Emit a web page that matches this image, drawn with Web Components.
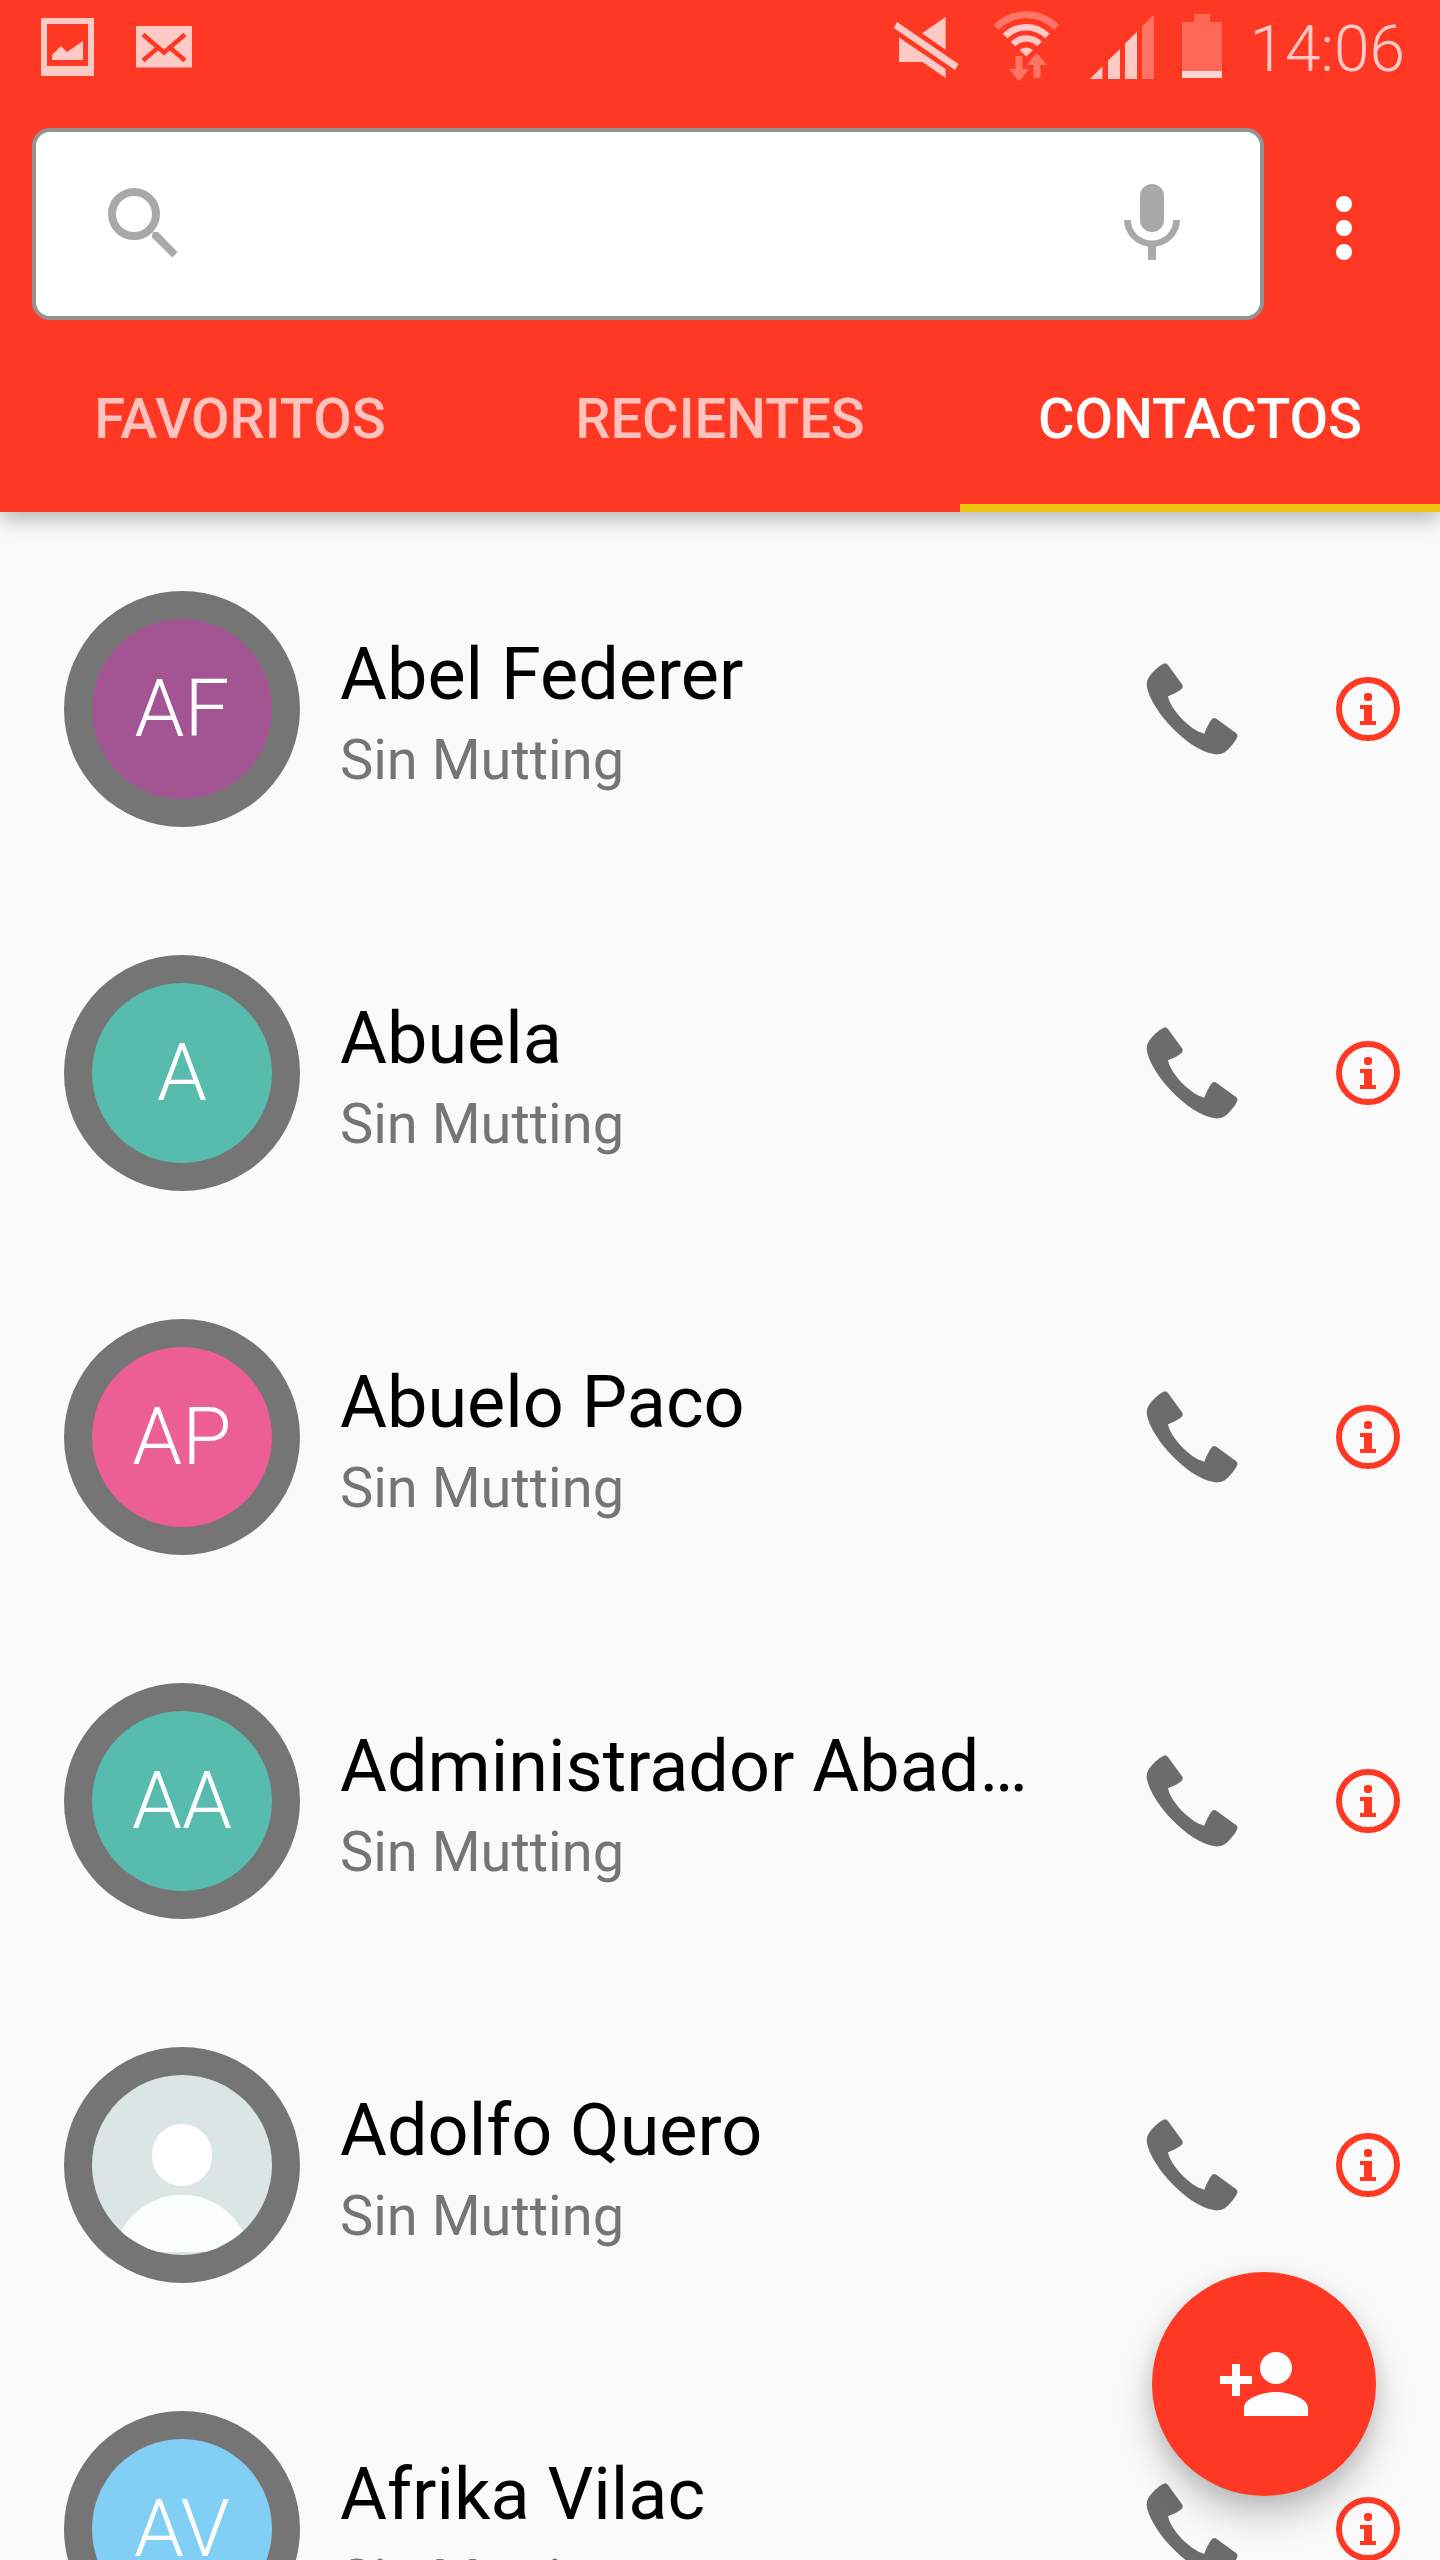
<!DOCTYPE html>
<html lang="es">
<head>
<meta charset="utf-8">
<meta name="viewport" content="width=device-width, initial-scale=1">
<title>Contactos</title>
<style>
  body { margin: 0; background: #fafafa; font-family: Roboto, "Liberation Sans", sans-serif; }
</style>
</head>
<body>
<dialer-app>
  <app-header slot="header">
    <status-bar slot="status" time="14:06"></status-bar>
    <search-bar slot="search" label="Buscar contactos"></search-bar>
    <tab-strip slot="tabs" tabs="FAVORITOS,RECIENTES,CONTACTOS" selected="CONTACTOS"></tab-strip>
  </app-header>
  <contact-row name="Abel Federer" initials="AF" color="#a35593">Sin Mutting</contact-row>
  <contact-row name="Abuela" initials="A" color="#57bbad">Sin Mutting</contact-row>
  <contact-row name="Abuelo Paco" initials="AP" color="#ec5f95">Sin Mutting</contact-row>
  <contact-row name="Administrador Abad…" initials="AA" color="#57bbad">Sin Mutting</contact-row>
  <contact-row name="Adolfo Quero" color="#dbe6e4">Sin Mutting</contact-row>
  <contact-row name="Afrika Vilac" initials="AV" color="#81cff5">Sin Mutting</contact-row>
  <add-button slot="action" label="Añadir contacto"></add-button>
</dialer-app>

<script>
const reset = `
  *, *::before, *::after { box-sizing: border-box; }
  svg { display: block; flex: none; }
  button { margin: 0; padding: 0; border: 0; background: none; font: inherit; color: inherit; cursor: pointer; }
`;

class BaseElement extends HTMLElement {
  constructor() {
    super();
    this.attachShadow({ mode: 'open' });
  }
  connectedCallback() {
    this.shadowRoot.innerHTML = `<style>${reset}${this.styles()}</style>${this.markup()}`;
  }
}

class DialerApp extends BaseElement {
  styles() {
    return `
      :host { display: flex; flex-direction: column; height: 100vh; overflow: hidden; background: #fafafa; }
      main { flex: 1; min-height: 0; overflow: hidden; padding-top: 15px; }
      .action { position: fixed; right: 64px; bottom: 64px; z-index: 2; }
    `;
  }
  markup() {
    return `
      <slot name="header"></slot>
      <main><slot></slot></main>
      <div class="action"><slot name="action"></slot></div>
    `;
  }
}

class AppHeader extends BaseElement {
  styles() {
    return `
      :host { display: block; flex: none; position: relative; z-index: 1; background: #ff3824; color: #fff;
              box-shadow: 0 8px 20px rgba(0, 0, 0, .26); }
    `;
  }
  markup() {
    return `<header><slot name="status"></slot><slot name="search"></slot><slot name="tabs"></slot></header>`;
  }
}

class StatusBar extends BaseElement {
  styles() {
    return `
      :host { display: flex; justify-content: space-between; height: 96px; padding: 0 35px 0 41px; color: #ffcac6; }
      .group { display: flex; align-items: flex-start; gap: 28px; }
      .group.notices { gap: 41px; }
      svg { fill: #ffcac6; }
      .faint { fill: #ff7465; }
      time { font-size: 64px; font-weight: 300; line-height: 100px; }
    `;
  }
  markup() {
    return `
      <div class="group notices">
        <svg width="54" height="96" viewBox="41 0 54 96" aria-hidden="true">
          <path fill-rule="evenodd" d="M41 18h53v58H41zM47 24v42h41V24z"/>
          <path d="M52 60v-5l9-9 6 6 16-11v19z"/>
        </svg>
        <svg width="56" height="96" viewBox="136 0 56 96" aria-hidden="true">
          <path d="M136 26h56v41.500h-56z"/>
          <path d="M143 34.500L164 52.500 185 34.500M143 60.500L157 48.500M171 48.500L185 60.500" fill="none" stroke="#ff3824" stroke-width="4.500"/>
        </svg>
      </div>
      <div class="group">
        <svg width="70" height="96" viewBox="894 0 70 96" aria-hidden="true">
          <path d="M898 22L959.500 64 956 70 894.800 28zM946.600 17V49.700L923 33.300zM900 37.500L946.600 69V78L923.600 62H900z"/>
        </svg>
        <svg width="70" height="96" viewBox="992 0 70 96" aria-hidden="true">
          <g fill="none" stroke-width="6.500">
            <path stroke="#ff7465" stroke-width="7" d="M997 27.500a42.500 42.500 0 0 1 60.500 0"/>
            <path stroke="#ffcac6" d="M1006 36a30 30 0 0 1 42.500 0"/>
            <path stroke="#ffcac6" d="M1014 44a19 19 0 0 1 26.500 0"/>
          </g>
          <path d="M1020.500 50a10 10 0 0 1 13.500 0L1027.300 56.500z"/>
          <path class="faint" d="M1016.500 56h7v13h6.500L1020 81.500 1010 69h6.500zM1037.600 52.700L1048 65h-6.500v13h-7V65h-7z"/>
        </svg>
        <svg width="65" height="96" viewBox="1090 0 65 96" aria-hidden="true">
          <path d="M1091 79L1103.400 66.500V79zM1109 79V60.500L1121 49V79zM1126 79V43.500L1138 31.700V79z"/>
          <path class="faint" d="M1143 79V26.500L1155 14.500V79z"/>
        </svg>
        <svg width="40" height="96" viewBox="1183 0 40 96" aria-hidden="true">
          <path fill="#ff6757" d="M1195 14h16v8h12v49h-40V22h12z"/>
          <path fill="#ffd8d4" d="M1183 71h40v7h-40z"/>
        </svg>
        <time>${this.getAttribute('time')}</time>
      </div>
    `;
  }
}

class SearchBar extends BaseElement {
  styles() {
    return `
      :host { display: flex; align-items: center; padding: 32px 48px 0 32px; }
      form { flex: 1; display: flex; align-items: center; height: 192px; margin: 0; padding: 0 60px 0 60px;
             background: #fff; border: 4px solid #939393; border-radius: 18px; }
      input { flex: 1; min-width: 0; height: 96px; border: 0; outline: 0; padding: 0 24px; background: none;
              font: inherit; font-size: 56px; color: #000; }
      form svg { fill: #a9a9a9; }
      .more { display: flex; justify-content: center; width: 96px; margin-left: 32px; padding-top: 8px; }
      .more svg { fill: #fff; }
    `;
  }
  markup() {
    return `
      <form role="search">
        <svg width="96" height="96" viewBox="96 176 96 96" aria-hidden="true">
          <circle cx="134" cy="214" r="22" fill="none" stroke="#a9a9a9" stroke-width="8"/>
          <path d="M152 235l1-3h5l19.500 20-5 5.500-20.500-20z"/>
        </svg>
        <input type="text" aria-label="${this.getAttribute('label')}">
        <button type="button" aria-label="Búsqueda por voz">
          <svg width="96" height="96" viewBox="1104 176 96 96" aria-hidden="true">
            <rect x="1140" y="184" width="24" height="48" rx="12"/>
            <path d="M1124 220h6.800a21.200 20.500 0 0 0 42.400 0h6.800a28 27 0 0 1-24 26.400V260h-8v-13.600A28 27 0 0 1 1124 220z"/>
          </svg>
        </button>
      </form>
      <button class="more" type="button" aria-label="Más opciones">
        <svg width="96" height="96" viewBox="0 0 24 24" aria-hidden="true">
          <circle cx="12" cy="6" r="2"/><circle cx="12" cy="12" r="2"/><circle cx="12" cy="18" r="2"/>
        </svg>
      </button>
    `;
  }
}

class TabStrip extends BaseElement {
  styles() {
    return `
      :host { display: block; }
      div { display: flex; }
      button { flex: 1 1 0; height: 192px; padding-top: 6px; font-size: 56px; font-weight: 500; line-height: 66px;
               color: #ffc2bd; text-align: center; }
      button[aria-selected="true"] { color: #fff; box-shadow: inset 0 -8px #efc312; }
    `;
  }
  markup() {
    const selected = this.getAttribute('selected');
    const tabs = this.getAttribute('tabs').split(',')
      .map(t => `<button type="button" role="tab" aria-selected="${t === selected}">${t}</button>`).join('');
    return `<div role="tablist">${tabs}</div>`;
  }
}

class ContactAvatar extends BaseElement {
  styles() {
    return `
      :host { display: block; flex: none; width: 236px; height: 236px; border-radius: 50%; background: #757575; padding: 28px; box-sizing: border-box; }
      .disc { width: 180px; height: 180px; border-radius: 50%; overflow: hidden; background: ${this.getAttribute('color')};
              color: #fff; font-size: 80px; font-weight: 300; line-height: 180px; text-align: center; }
    `;
  }
  markup() {
    const initials = this.getAttribute('initials');
    const person = `
      <svg width="180" height="180" viewBox="0 0 180 180" aria-hidden="true">
        <rect x="60" y="49" width="60" height="62" rx="30" fill="#fff"/>
        <path d="M22 177a69 69 0 0 1 136 0z" fill="#fbfffb"/>
      </svg>`;
    return `<div class="disc">${initials || person}</div>`;
  }
}

class ContactRow extends BaseElement {
  styles() {
    return `
      :host { display: flex; align-items: center; height: 364px; padding: 0 40px 0 64px; }
      .text { flex: 1; min-width: 0; margin-left: 40px; }
      .name, .detail { overflow: hidden; white-space: nowrap; text-overflow: ellipsis; }
      .name { font-size: 72px; line-height: 103px; color: #000; }
      .detail { font-size: 56px; line-height: 69px; color: #757575; }
      .call svg { fill: #6c6c6c; }
      .info { margin-left: 96px; }
    `;
  }
  markup() {
    const name = this.getAttribute('name');
    const initials = this.getAttribute('initials') || '';
    return `
      <contact-avatar initials="${initials}" color="${this.getAttribute('color')}"></contact-avatar>
      <div class="text">
        <div class="name">${name}</div>
        <div class="detail"><slot></slot></div>
      </div>
      <button class="call" type="button" aria-label="Llamar">
        <svg width="96" height="96" viewBox="132 93 288 288" aria-hidden="true">
          <path d="M189 102Q198 97 204 105L246 163Q251 171 244 178C233 187 218 194 204 199C212 240 272 302 313 311C318 296 325 282 334 269Q340 261 349 266L408 309Q415 315 411 323C402 340 388 356 374 367Q363 375 345 373C300 366 253 331 218 295C180 257 145 205 140 166Q139 153 147 141C157 126 173 111 189 102Z"/>
        </svg>
      </button>
      <button class="info" type="button" aria-label="Información">
        <svg width="64" height="64" viewBox="0 0 64 64" fill="#ff3824" aria-hidden="true">
          <circle cx="32" cy="32" r="29" fill="none" stroke="#ff3824" stroke-width="6"/>
          <rect x="28" y="16" width="8" height="8" rx="3"/>
          <path d="M24 28h12v16h4v4H24v-4h4V32h-4z"/>
        </svg>
      </button>
    `;
  }
}

class AddButton extends BaseElement {
  styles() {
    return `
      :host { display: block; }
      button { display: flex; align-items: center; justify-content: center; width: 224px; height: 224px; border-radius: 50%;
               background: #ff3824; box-shadow: 0 20px 36px rgba(0, 0, 0, .22), 0 4px 20px rgba(0, 0, 0, .1); }
      svg { fill: #fff; }
    `;
  }
  markup() {
    return `
      <button type="button" aria-label="${this.getAttribute('label')}">
        <svg width="96" height="96" viewBox="0 0 24 24" aria-hidden="true">
          <path d="M15 12c2.210 0 4-1.790 4-4s-1.790-4-4-4-4 1.790-4 4 1.790 4 4 4zm-9-2V7H4v3H1v2h3v3h2v-3h3v-2H6zm9 4c-2.670 0-8 1.340-8 4v2h16v-2c0-2.660-5.330-4-8-4z"/>
        </svg>
      </button>
    `;
  }
}

customElements.define('contact-avatar', ContactAvatar);
customElements.define('contact-row', ContactRow);
customElements.define('status-bar', StatusBar);
customElements.define('search-bar', SearchBar);
customElements.define('tab-strip', TabStrip);
customElements.define('add-button', AddButton);
customElements.define('app-header', AppHeader);
customElements.define('dialer-app', DialerApp);
</script>
</body>
</html>
